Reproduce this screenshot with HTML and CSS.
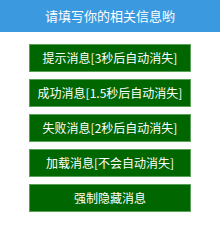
FILE: index.html
```html
<!DOCTYPE html>
<html>
<head>
<meta charset="utf-8">
<link rel="stylesheet" href="styles.css">
</head>
<body>
<div class="header">请填写你的相关信息哟</div>
<div class="list">
  <div class="btn">提示消息[3秒后自动消失]</div>
  <div class="btn">成功消息[1.5秒后自动消失]</div>
  <div class="btn">失败消息[2秒后自动消失]</div>
  <div class="btn">加载消息[不会自动消失]</div>
  <div class="btn">强制隐藏消息</div>
</div>
</body>
</html>
```
FILE: styles.css
```css
html, body {
  margin: 0;
  padding: 0;
  background: #fff;
  font-family: "Noto Sans CJK SC", "Liberation Sans", sans-serif;
}
.header {
  height: 32px;
  line-height: 32px;
  background: #3b99e0;
  color: #fff;
  text-align: center;
  font-size: 13px;
}
.list {
  display: flex;
  flex-direction: column;
  align-items: center;
  gap: 7px;
  padding-top: 12px;
}
.btn {
  box-sizing: border-box;
  width: 162px;
  height: 28px;
  line-height: 26px;
  background: #006600;
  border: 1px solid #5aa05a;
  color: #fff;
  text-align: center;
  font-size: 12px;
  white-space: nowrap;
}
```
